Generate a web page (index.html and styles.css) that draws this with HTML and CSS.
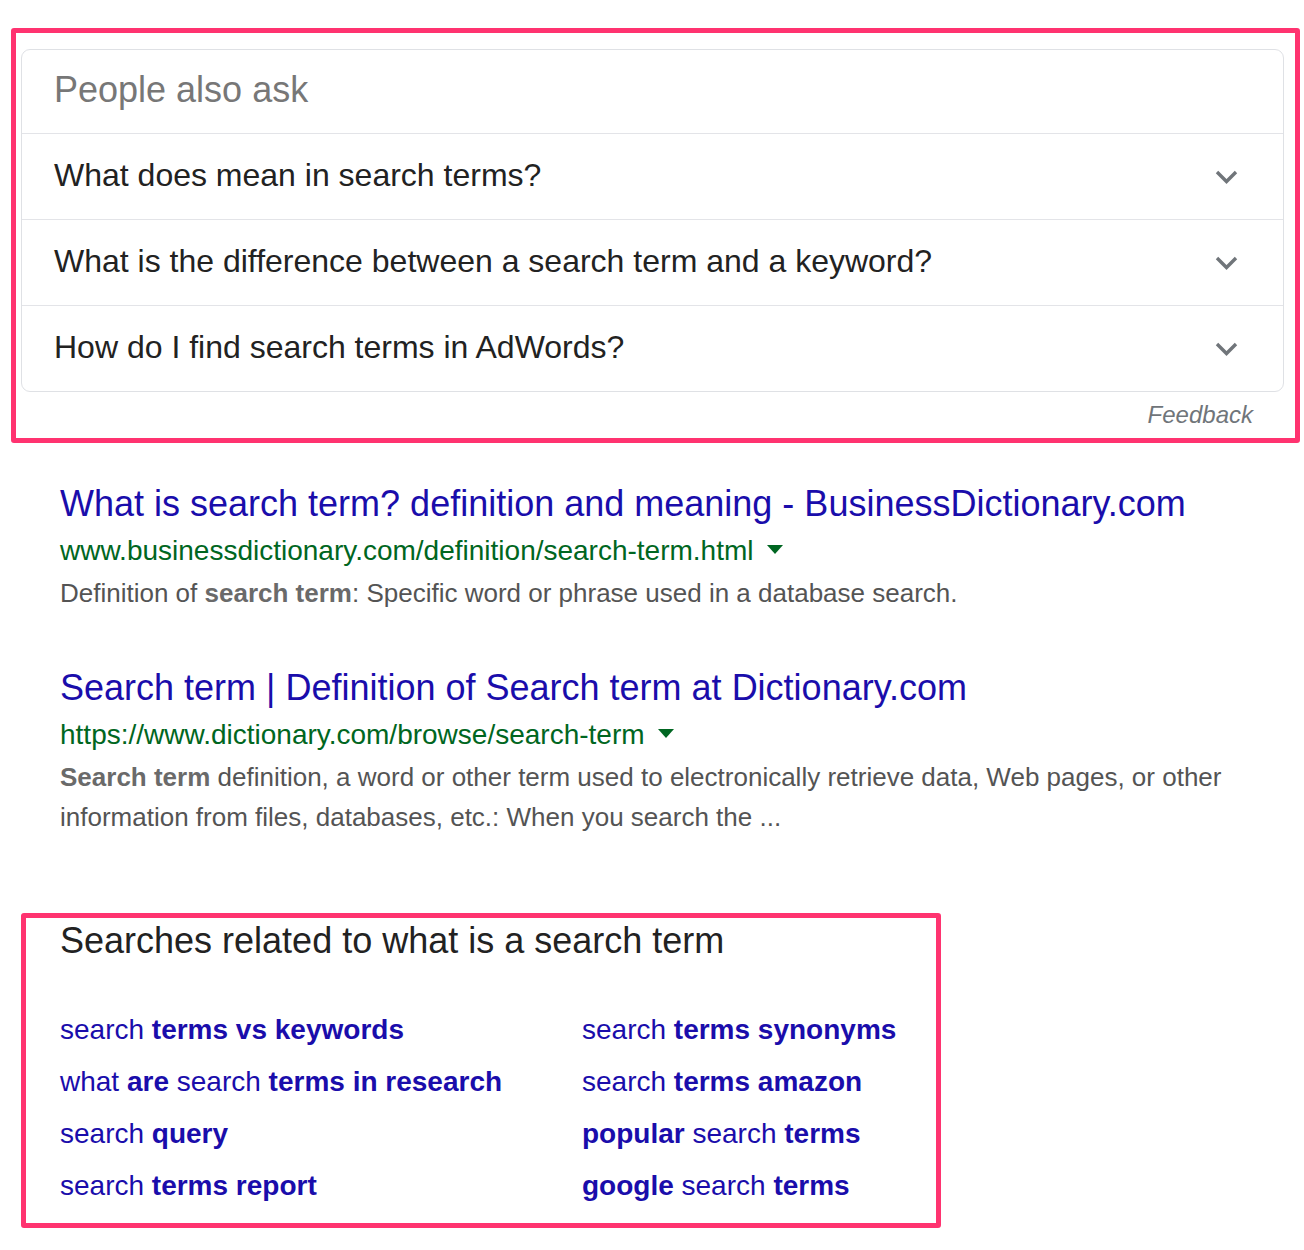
FILE: index.html
```html
<!DOCTYPE html>
<html>
<head>
<meta charset="utf-8">
<link rel="stylesheet" href="styles.css">
</head>
<body>
<div class="page">
  <section class="paa-frame">
    <div class="paa-card">
      <div class="paa-head">People also ask</div>
      <div class="paa-row"><span>What does mean in search terms?</span><svg class="chev" viewBox="0 0 23 14" width="23" height="14"><path d="M2 2 L11.5 11.5 L21 2" fill="none" stroke="#70757a" stroke-width="3.4"/></svg></div>
      <div class="paa-row"><span>What is the difference between a search term and a keyword?</span><svg class="chev" viewBox="0 0 23 14" width="23" height="14"><path d="M2 2 L11.5 11.5 L21 2" fill="none" stroke="#70757a" stroke-width="3.4"/></svg></div>
      <div class="paa-row"><span>How do I find search terms in AdWords?</span><svg class="chev" viewBox="0 0 23 14" width="23" height="14"><path d="M2 2 L11.5 11.5 L21 2" fill="none" stroke="#70757a" stroke-width="3.4"/></svg></div>
    </div>
    <div class="feedback">Feedback</div>
  </section>

  <div class="results">
    <div class="result first">
      <a class="title">What is search term? definition and meaning - BusinessDictionary.com</a>
      <div class="url">www.businessdictionary.com/definition/search-term.html<span class="tri"></span></div>
      <div class="snippet">Definition of <b>search term</b>: Specific word or phrase used in a database search.</div>
    </div>
    <div class="result second">
      <a class="title">Search term | Definition of Search term at Dictionary.com</a>
      <div class="url">https://www.dictionary.com/browse/search-term<span class="tri"></span></div>
      <div class="snippet"><b>Search term</b> definition, a word or other term used to electronically retrieve data, Web pages, or other information from files, databases, etc.: When you search the ...</div>
    </div>
  </div>

  <section class="related">
    <h3 class="related-head">Searches related to what is a search term</h3>
    <div class="related-grid">
      <a>search <b>terms vs keywords</b></a>
      <a>search <b>terms synonyms</b></a>
      <a>what <b>are</b> search <b>terms in research</b></a>
      <a>search <b>terms amazon</b></a>
      <a>search <b>query</b></a>
      <a><b>popular</b> search <b>terms</b></a>
      <a>search <b>terms report</b></a>
      <a><b>google</b> search <b>terms</b></a>
    </div>
  </section>
</div>
</body>
</html>
```

FILE: styles.css
```css
html, body {
  margin: 0;
  padding: 0;
  background: #fff;
}
body {
  font-family: "Liberation Sans", Arial, sans-serif;
  color: #222;
}
.page {
  padding-top: 28px;
}
.paa-frame {
  box-sizing: border-box;
  width: 1289px;
  margin-left: 11px;
  border: 5px solid #ff3370;
  border-radius: 3px;
  padding: 16px 11px 1px 5px;
}
.paa-card {
  border: 1px solid #dfe1e5;
  border-radius: 9px;
}
.paa-head {
  height: 83px;
  line-height: 80px;
  padding-left: 32px;
  font-size: 36px;
  color: #777;
}
.paa-row {
  display: flex;
  align-items: center;
  justify-content: space-between;
  height: 85px;
  border-top: 1px solid #e3e4e8;
  padding: 0 45px 0 32px;
  font-size: 32px;
  color: #222;
}
.paa-row span {
  position: relative;
  top: -1px;
}
.chev {
  display: block;
}
.feedback {
  text-align: right;
  padding-right: 31px;
  font-size: 24px;
  font-style: italic;
  line-height: 45px;
  color: #70757a;
}
.results {
  padding-left: 60px;
}
.result.first {
  margin-top: 39px;
}
.result.second {
  margin-top: 53px;
}
.title {
  display: block;
  font-size: 36px;
  line-height: 44px;
  color: #1a0dab;
  white-space: nowrap;
}
.url {
  margin-top: 5px;
  font-size: 28px;
  line-height: 40px;
  color: #006621;
}
.tri {
  display: inline-block;
  width: 0;
  height: 0;
  margin-left: 13px;
  border-left: 8px solid transparent;
  border-right: 8px solid transparent;
  border-top: 9px solid #006621;
  vertical-align: middle;
  position: relative;
  top: -3px;
}
.snippet {
  margin-top: 2px;
  font-size: 26px;
  line-height: 40px;
  color: #545454;
  width: 1200px;
}
.snippet b {
  color: #6a6a6a;
}
.related {
  box-sizing: border-box;
  width: 920px;
  margin: 76px 0 0 21px;
  border: 5px solid #ff3370;
  border-radius: 3px;
  padding: 0 0 11px 34px;
}
.related-head {
  margin: 0;
  font-weight: normal;
  font-size: 36px;
  line-height: 46px;
  color: #222;
}
.related-grid {
  margin-top: 40px;
  display: grid;
  grid-template-columns: 522px auto;
}
.related-grid a {
  font-size: 28px;
  line-height: 52px;
  color: #1a0dab;
  white-space: nowrap;
}
```
